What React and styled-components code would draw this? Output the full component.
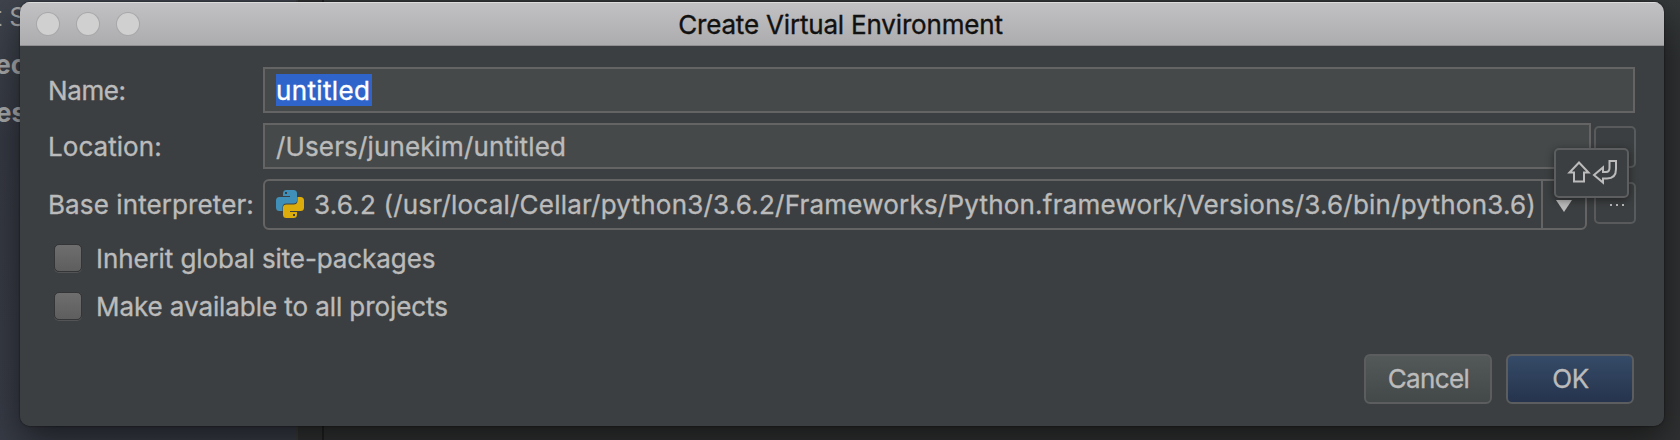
import React from "react";
import styled, { createGlobalStyle } from "styled-components";

const Global = createGlobalStyle`
  * { box-sizing: border-box; }
  body { margin: 0; overflow: hidden; background: #262627; }
`;

const Desktop = styled.div`
  position: relative;
  width: 1680px;
  height: 440px;
  padding: 2px 16px 14px 20px;
  overflow: hidden;
  display: flex;
  background: linear-gradient(180deg, #343838 0, #2f3133 60px, #303132 100%);
  font-family: Inter, "Liberation Sans", sans-serif;
  font-size: 26px;
`;

const Sidebar = styled.div`
  position: absolute;
  left: 0;
  top: 0;
  width: 298px;
  height: 440px;
  background: linear-gradient(180deg, #3e434c 0, #343841 140px, #373b45 100%);
  border-right: 2px solid #3a3a3b;
`;

const Gutter = styled.div`
  position: absolute;
  left: 298px;
  top: 0;
  width: 26px;
  height: 440px;
  background: #303132;
  border-right: 2px solid #202021;
`;

const SidebarText = styled.span`
  position: absolute;
  right: ${(p) => p.$right}px;
  top: ${(p) => p.$top}px;
  line-height: 32px;
  font-weight: ${(p) => p.$weight};
  color: #a5a6a8;
  white-space: pre;
`;

const Dialog = styled.section`
  position: relative;
  flex: 1;
  display: flex;
  flex-direction: column;
  border-radius: 10px;
  overflow: hidden;
  background: #3c3f41;
`;

const Shadow = styled.div`
  position: relative;
  flex: 1;
  display: flex;
  border-radius: 10px;
  box-shadow: 0 0 2px rgba(0, 0, 0, 0.65), 0 14px 34px rgba(0, 0, 0, 0.5);
`;

const TitleBar = styled.header`
  position: relative;
  height: 44px;
  padding: 3px 3px 0 0;
  display: flex;
  align-items: center;
  justify-content: center;
  background: linear-gradient(180deg, #c2c1c3, #acabad);
  border-bottom: 1px solid #8f8e90;
  box-shadow: inset 0 1px 0 #dddcdd;
`;

const Lights = styled.div`
  position: absolute;
  left: 17px;
  top: 11px;
  display: flex;
  gap: 18px;
`;

const Light = styled.span`
  width: 22px;
  height: 22px;
  border-radius: 50%;
  background: #d0d0d0;
  box-shadow: 0 0 0 1px #a8a7a9;
`;

const Text = styled.span`
  line-height: 32px;
  white-space: pre;
  color: ${(p) => p.$color || "#bbbbbb"};
  letter-spacing: ${(p) => p.$track || 0}px;
  -webkit-text-stroke: 0.35px currentColor;
`;

const Body = styled.div`
  flex: 1;
  display: flex;
  flex-direction: column;
  padding: 21px 28px 22px 28px;
`;

const Row = styled.div`
  display: flex;
  align-items: center;
  height: ${(p) => p.$height}px;
  margin-bottom: ${(p) => p.$after}px;
`;

const Label = styled.label`
  width: 215px;
  flex: none;
  display: flex;
  padding-top: ${(p) => p.$drop || 0}px;
`;

const Field = styled.div`
  height: 46px;
  width: ${(p) => p.$width}px;
  flex: none;
  display: flex;
  align-items: center;
  padding: 2px 0 0 11px;
  border: 2px solid #646464;
  background: #45494a;
`;

const Selection = styled.span`
  display: flex;
  width: 96px;
  height: 32px;
  margin-bottom: 2px;
  padding-top: 1px;
  background: #2f65ca;
`;

const Combo = styled.div`
  width: 1324px;
  height: 51px;
  flex: none;
  display: flex;
  align-items: center;
  border: 2px solid #646464;
  border-radius: 6px;
  padding-left: 11px;
`;

const ComboText = styled.div`
  flex: 1;
  min-width: 0;
  display: flex;
  margin-left: 10px;
`;

const ComboArrow = styled.div`
  width: 44px;
  height: 47px;
  display: flex;
  align-items: flex-start;
  border-left: 2px solid #646464;
  padding: 19px 0 0 13px;
`;

const MoreButton = styled.button`
  width: 42px;
  height: 42px;
  align-self: flex-start;
  margin: 3px 0 0 ${(p) => p.$gap}px;
  padding: 3px 0 0 5px;
  flex: none;
  display: flex;
  align-items: center;
  justify-content: center;
  gap: 4px;
  border: 2px solid #585a5b;
  border-radius: 5px;
  background: transparent;
`;

const Dot = styled.i`
  width: 2px;
  height: 2px;
  background: #bbbbbb;
`;

const Check = styled.span`
  width: 28px;
  height: 28px;
  margin: 0 14px 1px 6px;
  border-radius: 5px;
  border: 1px solid #333537;
  background: linear-gradient(180deg, #6e6e6e, #5e5e5e);
  box-shadow: 0 1px 0 #525455;
`;

const CheckLabel = styled.label`
  display: flex;
  padding-top: 2px;
`;

const Actions = styled.footer`
  display: flex;
  justify-content: flex-end;
  gap: 14px;
  margin-top: auto;
  padding-right: 2.5px;
`;

const Button = styled.button`
  width: 128px;
  height: 50px;
  padding: 0 0 0 2px;
  display: flex;
  align-items: center;
  justify-content: center;
  font: inherit;
  border: 2px solid #5b5d5e;
  border-radius: 6px;
  background: ${(p) =>
    p.$primary
      ? "linear-gradient(180deg, #354b67, #26344d)"
      : "linear-gradient(180deg, #535859, #434849)"};
`;

const Tooltip = styled.div`
  position: absolute;
  left: 1534px;
  top: 146px;
  width: 75px;
  height: 50px;
  display: flex;
  border: 2px solid #5c5e5f;
  border-radius: 5px;
  background: #3c3f41;
  box-shadow: 0 2px 9px rgba(0, 0, 0, 0.45);
`;

const Logo = styled.svg`
  flex: none;
  margin-bottom: 1px;
`;

function PythonLogo() {
  return (
    <Logo width="28" height="28" viewBox="0 0 28 28">
      <path
        fill="#3f8fb8"
        d="M10.500 0h7Q21 0 21 3.500V10.500Q21 13.500 17.500 13.500H10.500Q6.500 13.500 6.500 17.500V21H3.500Q0 21 0 17.500V10.500Q0 7 3.500 7H14V6H7V3.500Q7 0 10.500 0z"
      />
      <path
        fill="#dbac0c"
        d="M21.500 7h3Q28 7 28 10.500V17.500Q28 21 24.500 21H14V22H21V24.500Q21 28 17.500 28H10.500Q7 28 7 24.500V17.500Q7 14.500 10.500 14.500H17.500Q21.500 14.500 21.500 10.500z"
      />
      <rect x="9" y="2" width="2" height="2" fill="#3c3f41" />
      <rect x="17" y="24" width="2" height="2" fill="#3c3f41" />
    </Logo>
  );
}

export default function App() {
  return (
    <>
      <Global />
      <Desktop>
        <Sidebar />
        <Gutter />
        <SidebarText $right={1654} $top={1} $weight={400}>t S</SidebarText>
        <SidebarText $right={1654} $top={49} $weight={700}>ec</SidebarText>
        <SidebarText $right={1654} $top={97} $weight={700}>es</SidebarText>
        <Shadow>
          <Dialog>
            <TitleBar>
              <Lights>
                <Light />
                <Light />
                <Light />
              </Lights>
              <Text $color="#111" $track={-0.18}>Create Virtual Environment</Text>
            </TitleBar>
            <Body>
              <Row $height={46} $after={10}>
                <Label $drop={2}><Text $track={-0.4}>Name:</Text></Label>
                <Field $width={1372}>
                  <Selection><Text $color="#fff" $track={0.35}>untitled</Text></Selection>
                </Field>
              </Row>
              <Row $height={46} $after={10}>
                <Label $drop={2}><Text $track={0.05}>Location:</Text></Label>
                <Field $width={1328}><Text $track={0.14}>/Users/junekim/untitled</Text></Field>
                <MoreButton $gap={2.5} aria-label="Browse location" />
              </Row>
              <Row $height={51} $after={4}>
                <Label><Text $track={0.1}>Base interpreter:</Text></Label>
                <Combo>
                  <PythonLogo />
                  <ComboText>
                    <Text $track={0.215}>3.6.2 (/usr/local/Cellar/python3/3.6.2/Frameworks/Python.framework/Versions/3.6/bin/python3.6)</Text>
                  </ComboText>
                  <ComboArrow>
                    <svg width="16" height="12" viewBox="0 0 16 12">
                      <path d="M0 0H16L8 12z" fill="#bbbbbb" />
                    </svg>
                  </ComboArrow>
                </Combo>
                <MoreButton $gap={6.5} aria-label="Browse interpreter">
                  <Dot />
                  <Dot />
                  <Dot />
                </MoreButton>
              </Row>
              <Row $height={48} $after={0}>
                <Check />
                <CheckLabel><Text $track={-0.1}>Inherit global site-packages</Text></CheckLabel>
              </Row>
              <Row $height={48} $after={0}>
                <Check />
                <CheckLabel><Text $track={-0.08}>Make available to all projects</Text></CheckLabel>
              </Row>
              <Actions>
                <Button><Text $track={-0.6}>Cancel</Text></Button>
                <Button $primary><Text $track={-0.5}>OK</Text></Button>
              </Actions>
            </Body>
          </Dialog>
          <Tooltip>
            <svg width="71" height="45" viewBox="0 0 71 45" fill="none" stroke="#bbbbbb" strokeWidth="2">
              <path d="M23 12.500L32.500 22.500H28V31.500H18V22.500H13.500z" />
              <path d="M53.500 11H60V19Q60 28.500 51 28.500H47V32.500L38 25L47 17.500V22H50Q53.500 22 53.500 18z" />
            </svg>
          </Tooltip>
        </Shadow>
      </Desktop>
    </>
  );
}
